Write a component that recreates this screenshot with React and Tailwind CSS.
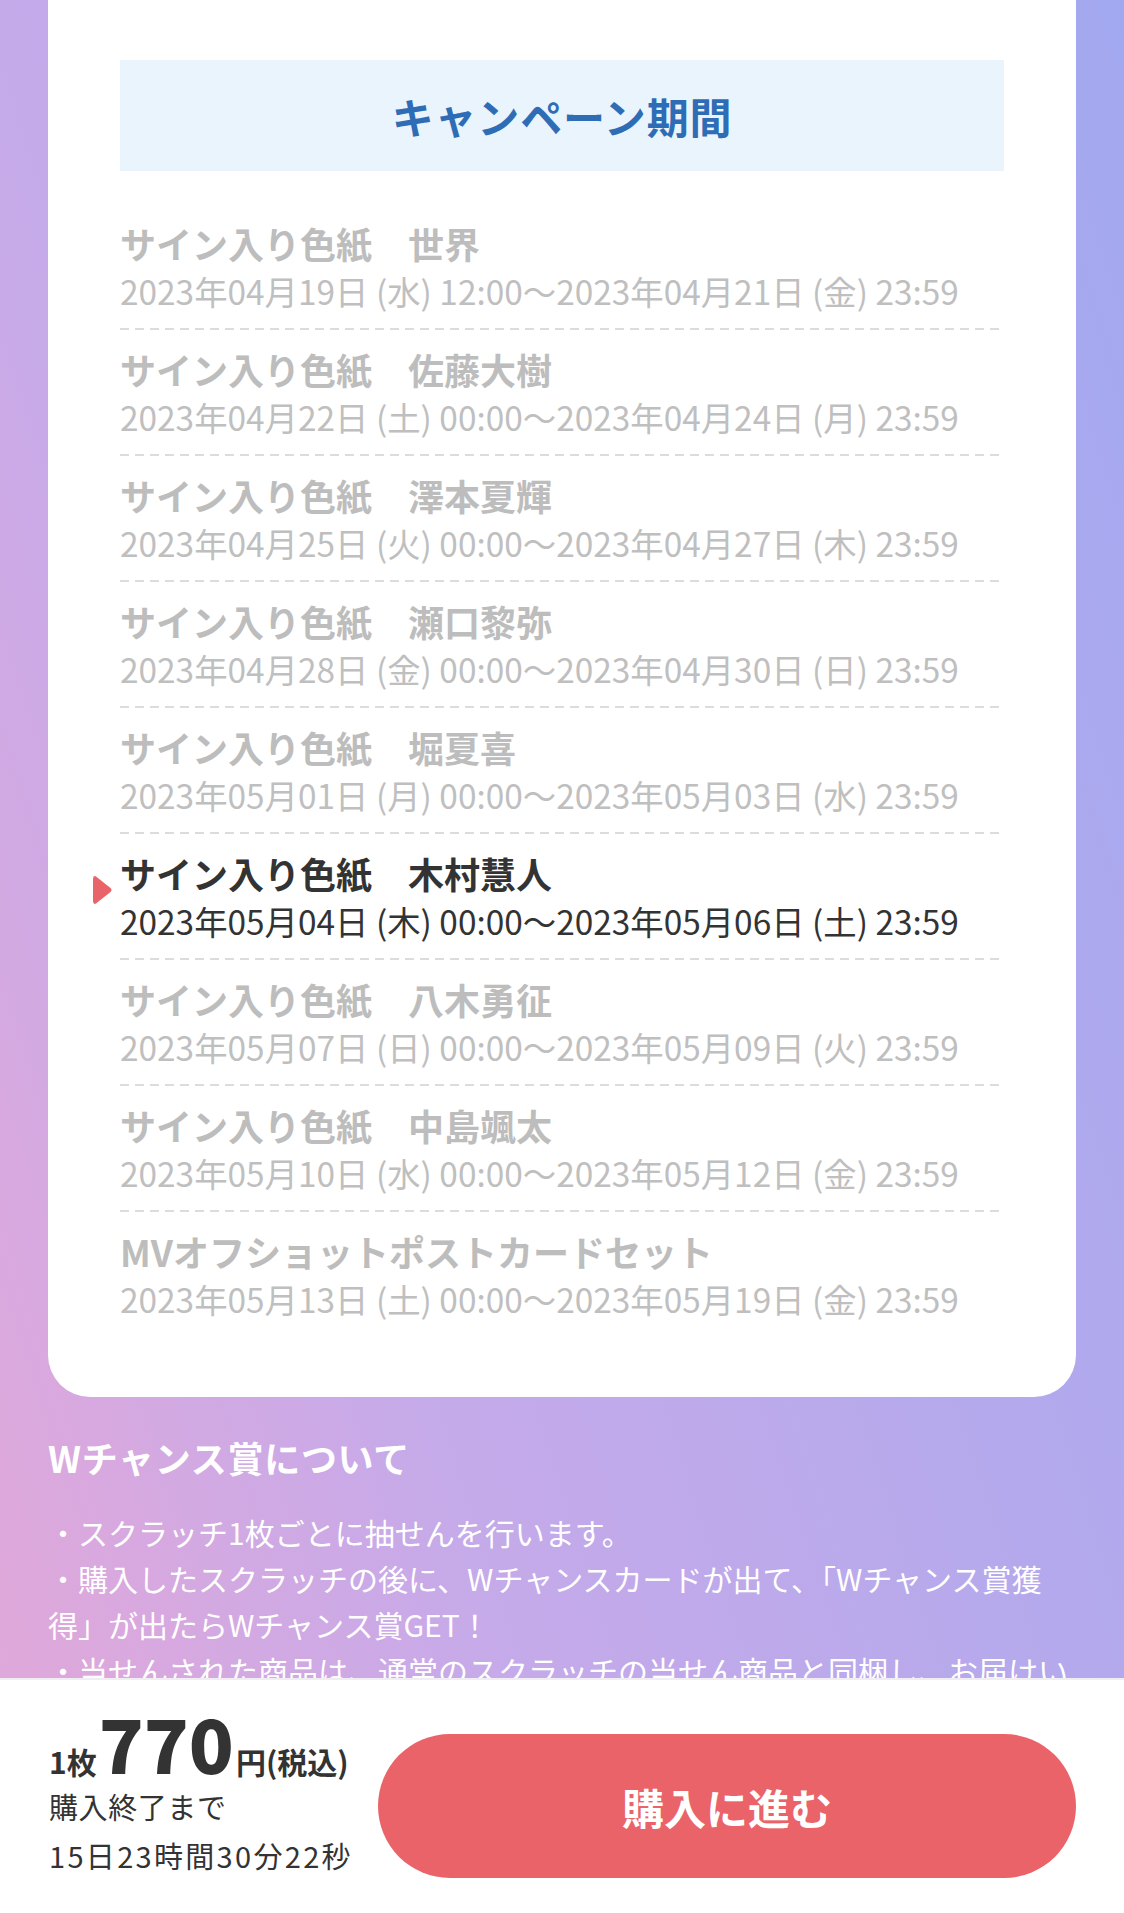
import React from "react";

const periods = [
  { name: "サイン入り色紙　世界", term: "2023年04月19日 (水) 12:00〜2023年04月21日 (金) 23:59" },
  { name: "サイン入り色紙　佐藤大樹", term: "2023年04月22日 (土) 00:00〜2023年04月24日 (月) 23:59" },
  { name: "サイン入り色紙　澤本夏輝", term: "2023年04月25日 (火) 00:00〜2023年04月27日 (木) 23:59" },
  { name: "サイン入り色紙　瀬口黎弥", term: "2023年04月28日 (金) 00:00〜2023年04月30日 (日) 23:59" },
  { name: "サイン入り色紙　堀夏喜", term: "2023年05月01日 (月) 00:00〜2023年05月03日 (水) 23:59" },
  { name: "サイン入り色紙　木村慧人", term: "2023年05月04日 (木) 00:00〜2023年05月06日 (土) 23:59", current: true },
  { name: "サイン入り色紙　八木勇征", term: "2023年05月07日 (日) 00:00〜2023年05月09日 (火) 23:59" },
  { name: "サイン入り色紙　中島颯太", term: "2023年05月10日 (水) 00:00〜2023年05月12日 (金) 23:59" },
  { name: "MVオフショットポストカードセット", term: "2023年05月13日 (土) 00:00〜2023年05月19日 (金) 23:59" },
];

const notes = [
  "・スクラッチ1枚ごとに抽せんを行います。",
  "・購入したスクラッチの後に、Wチャンスカードが出て、「Wチャンス賞獲得」が出たらWチャンス賞GET！",
  "・当せんされた商品は、通常のスクラッチの当せん商品と同梱し、お届けいたします。",
];

const Marker = () => (
  <svg
    className="absolute left-[-28px] top-[41px]"
    width="20"
    height="30"
    viewBox="0 0 20 30"
  >
    <path
      d="M4 1.5 Q1 0 1 4 V26 Q1 30 4 28.5 L18.5 17 Q20.5 15 18.5 13 Z"
      fill="#e9636a"
    />
  </svg>
);

const PeriodItem = ({ item, last }) => (
  <li className="relative">
    {item.current && <Marker />}
    <div className="pt-[15px] pb-[13px]">
      <p
        className={`text-[36px] leading-[48px] font-bold ${
          item.current ? "text-[#333333]" : "text-[#bdbdbd]"
        }`}
      >
        {item.name}
      </p>
      <p
        className={`text-[33.4px] leading-[48px] whitespace-nowrap ${
          item.current ? "text-[#333333]" : "text-[#bfbfbf]"
        }`}
      >
        {item.term}
      </p>
    </div>
    {!last && (
      <div className="h-[2px] bg-[repeating-linear-gradient(90deg,#dcdcdc_0px,#dcdcdc_9px,transparent_9px,transparent_15px)]"></div>
    )}
  </li>
);

const App = () => {
  return (
    <div className="h-[1913px] w-full flex flex-col overflow-hidden font-['Noto_Sans_CJK_JP','Noto_Sans',sans-serif]">
      <main className="flex-1 min-h-0 overflow-hidden px-[48px] bg-[linear-gradient(72deg,#e0a8da_0%,#c6aae9_30%,#a2a8f0_100%)]">
        <section className="bg-white rounded-b-[42px] px-[72px] pt-[60px] pb-[61px]">
          <div className="h-[111px] bg-[#eaf4fd] flex items-center justify-center">
            <h2 className="text-[42px] font-bold text-[#2e6db5] tracking-[0.02em]">
              キャンペーン期間
            </h2>
          </div>
          <ul className="mt-[33px]">
            {periods.map((item, i) => (
              <PeriodItem key={item.name} item={item} last={i === periods.length - 1} />
            ))}
          </ul>
        </section>

        <section className="pt-[36px] text-white">
          <h3 className="text-[36px] leading-[48px] font-bold tracking-[0.02em]">Wチャンス賞について</h3>
          <ul className="mt-[28px]">
            {notes.map((n) => (
              <li key={n} className="text-[30px] leading-[46px]">
                {n}
              </li>
            ))}
          </ul>
        </section>
      </main>

      <footer className="h-[235px] shrink-0 bg-white border-t-2 border-[#f1eef3] flex items-start pl-[49px] pr-[48px] pt-[25px]">
        <div className="flex flex-col text-[#333333]">
          <div className="flex items-baseline h-[72px] font-bold">
            <span className="text-[30px]">1枚</span>
            <span className="text-[74px] leading-none font-black mx-[2px]">770</span>
            <span className="text-[30px]">円(税込)</span>
          </div>
          <p className="mt-[5px] text-[29px] leading-[49px] tracking-[0.02em]">購入終了まで</p>
          <p className="text-[29px] leading-[49px] tracking-[0.08em]">15日23時間30分22秒</p>
        </div>
        <button className="ml-auto mt-[29px] w-[698px] h-[144px] rounded-full bg-[#ea6369] text-white text-[42px] font-bold">
          購入に進む
        </button>
      </footer>
    </div>
  );
};

export default App;
